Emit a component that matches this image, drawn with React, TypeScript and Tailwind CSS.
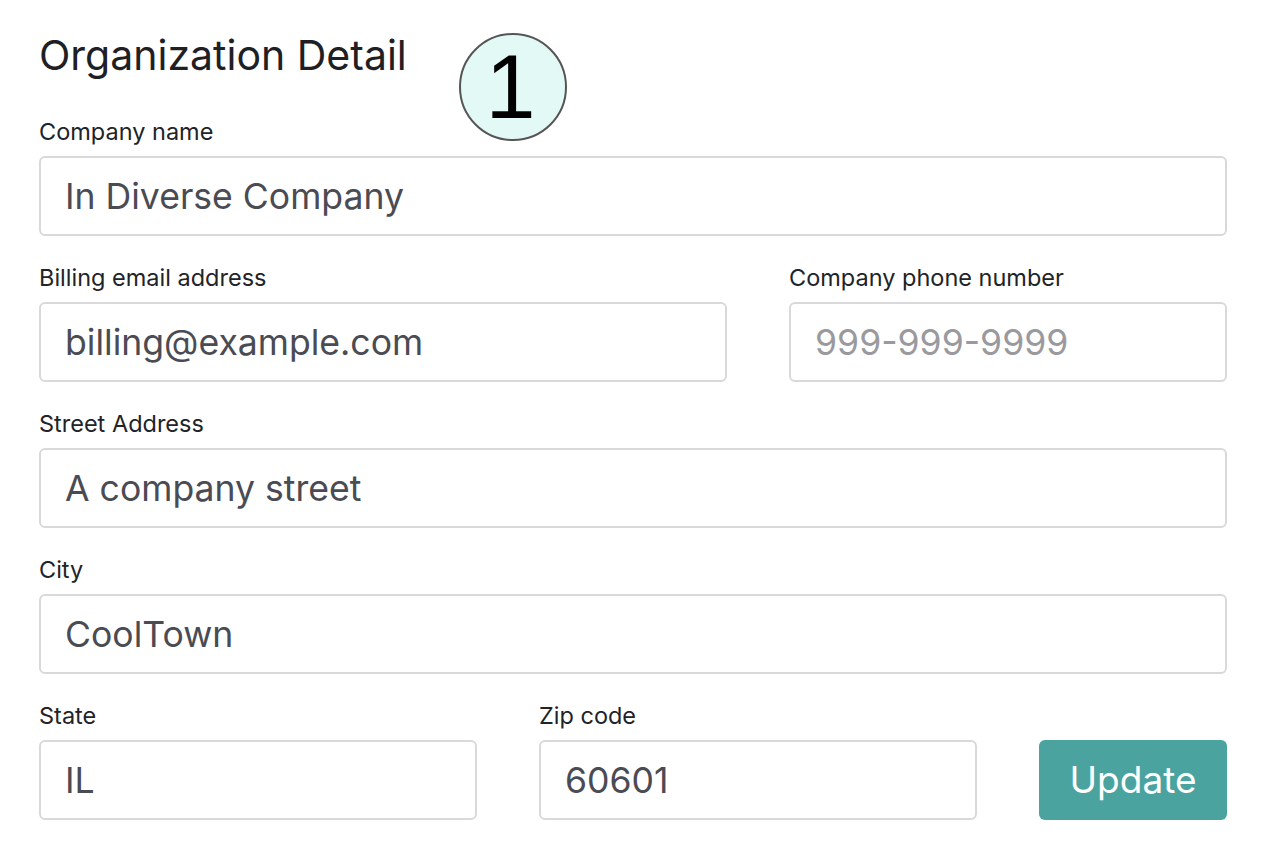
import React from 'react';

const Field: React.FC<{ label: string; value?: string; placeholder?: string; className?: string }> = ({
  label,
  value,
  placeholder,
  className = '',
}) => {
  return (
    <div className={`flex flex-col ${className}`}>
      <label className="mb-[8px] text-[23.5px] leading-[32px] text-[#222326]">{label}</label>
      <input
        type="text"
        defaultValue={value}
        placeholder={placeholder}
        className="h-[80px] w-full rounded-[6px] border-2 border-[#d9d9dc] bg-white px-[24px] text-[35.6px] text-[#4a4b53] placeholder:text-[#9a9a9e] outline-none"
      />
    </div>
  );
};

const App: React.FC = () => {
  return (
    <div className="min-h-[850px] w-[1276px] bg-white font-['Inter',sans-serif]">
      <div className="relative ml-[39px] w-[1188px] pt-[31px]">
        <h1 className="text-[41px] leading-[48px] font-normal text-[#1f2024]">Organization Detail</h1>

        <div className="absolute left-[420px] top-[33px] flex h-[108px] w-[108px] items-center justify-center rounded-full border-2 border-[#555] bg-[#e3f9f5]">
          <span className="-ml-[5px] font-['Liberation_Sans',sans-serif] text-[90px] leading-none text-black">1</span>
        </div>

        <div className="mt-[37px] flex flex-col gap-[26px]">
          <Field label="Company name" value="In Diverse Company" />

          <div className="flex gap-[62px]">
            <Field label="Billing email address" value="billing@example.com" className="w-[688px]" />
            <Field label="Company phone number" placeholder="999-999-9999" className="w-[438px]" />
          </div>

          <Field label="Street Address" value="A company street" />

          <Field label="City" value="CoolTown" />

          <div className="flex items-end gap-[62px]">
            <Field label="State" value="IL" className="w-[438px]" />
            <Field label="Zip code" value="60601" className="w-[438px]" />
            <button className="h-[80px] w-[188px] rounded-[6px] bg-[#4aa39f] text-[37px] text-white">
              Update
            </button>
          </div>
        </div>
      </div>
    </div>
  );
};

export default App;
